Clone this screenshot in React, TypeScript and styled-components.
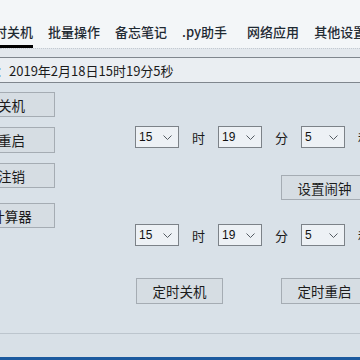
import styled, { createGlobalStyle } from 'styled-components';

const GlobalStyle = createGlobalStyle`
    html, body {
        margin: 0;
        padding: 0;
        overflow: hidden;
        background: #d9e1e8;
    }
`;

const cjk = `"Noto Sans CJK SC", "Noto Sans", sans-serif`;

// Janela inteira
const Window = styled.div`
    width: 360px;
    height: 360px;
    display: flex;
    flex-direction: column;
    overflow: hidden;
    background: #d9e1e8;
    font-family: ${cjk};
    color: #1b1b1b;
`;

const TabBar = styled.div`
    height: 48px;
    flex: none;
    display: flex;
    gap: 15px;
    background: #f3f6f8;
    white-space: nowrap;
`;

const Tab = styled.div<{ $active?: boolean; $offset?: number }>`
    box-sizing: border-box;
    height: 48px;
    display: flex;
    align-items: center;
    padding-top: 17px;
    margin-left: ${(p) => p.$offset ?? 0}px;
    border-bottom: 3px solid ${(p) => (p.$active ? '#000000' : 'transparent')};
    font-size: 13px;
    font-weight: 500;
    color: #1f2a33;
    flex: none;
`;

const Strip = styled.div`
    height: 8px;
    flex: none;
    background: #e3e8ed;
    border-top: 1px dotted #c3cad1;
`;

const DateRow = styled.div`
    box-sizing: border-box;
    height: 26px;
    flex: none;
    display: flex;
    align-items: center;
    background: #eaeef2;
    border-top: 1px solid #7f868d;
    border-bottom: 1px solid #7f868d;
    font-size: 13px;
    white-space: nowrap;
    margin-left: -4px;
`;

const Main = styled.div`
    height: 250px;
    flex: none;
    display: flex;
    gap: 80px;
    margin-left: -32px;
`;

const LeftColumn = styled.div`
    display: flex;
    flex-direction: column;
    padding-top: 9px;
    flex: none;
`;

const RightColumn = styled.div`
    display: flex;
    flex-direction: column;
    flex: none;
    width: 260px;
`;

const Button = styled.div<{ $top?: number; $height?: number }>`
    box-sizing: border-box;
    width: 87px;
    height: ${(p) => p.$height ?? 25}px;
    margin-top: ${(p) => p.$top ?? 0}px;
    display: flex;
    align-items: center;
    justify-content: center;
    background: #d6dde3;
    border: 1px solid #a5acb3;
    font-size: 13.5px;
    color: #1b1b1b;
    white-space: nowrap;
    flex: none;
`;

const ComboRow = styled.div<{ $top: number }>`
    display: flex;
    align-items: center;
    margin-top: ${(p) => p.$top}px;
    height: 22px;
`;

const Combo = styled.div`
    box-sizing: border-box;
    width: 44px;
    height: 22px;
    display: flex;
    align-items: center;
    justify-content: space-between;
    padding: 0 6px 0 3px;
    background: #edf1f5;
    border: 1px solid #7c8288;
    font-family: "Liberation Sans", Arial, sans-serif;
    font-size: 12px;
    color: #111;
    flex: none;
`;

const Unit = styled.div`
    width: 39px;
    text-align: center;
    font-size: 13px;
    flex: none;
`;

const ButtonRow = styled.div<{ $top: number; $left: number }>`
    display: flex;
    gap: 58px;
    margin-top: ${(p) => p.$top}px;
    padding-left: ${(p) => p.$left}px;
`;

const Footer = styled.div`
    height: 23px;
    flex: none;
    border-top: 1px solid #bcc5cd;
    background: #d8e0e7;
`;

const TaskEdge = styled.div`
    height: 3px;
    flex: none;
    background: #1c5a9f;
`;

const Chevron = () => (
    <svg width="9" height="5" viewBox="0 0 9 5">
        <polyline points="0.5,0.5 4.5,4.5 8.5,0.5" fill="none" stroke="#555c63" strokeWidth="1" />
    </svg>
);

const Select = ({ value }: { value: string }) => (
    <Combo>
        <span>{value}</span>
        <Chevron />
    </Combo>
);

const TimePicker = ({ top }: { top: number }) => (
    <ComboRow $top={top}>
        <Select value="15" />
        <Unit>时</Unit>
        <Select value="19" />
        <Unit>分</Unit>
        <Select value="5" />
        <Unit>秒</Unit>
    </ComboRow>
);

const App = () => {
    return (
        <Window>
            <GlobalStyle />
            <TabBar>
                <Tab $active $offset={-19}>定时关机</Tab>
                <Tab>批量操作</Tab>
                <Tab>备忘笔记</Tab>
                <Tab>.py助手</Tab>
                <Tab $offset={5}>网络应用</Tab>
                <Tab>其他设置</Tab>
            </TabBar>
            <Strip />
            <DateRow>：2019年2月18日15时19分5秒</DateRow>
            <Main>
                <LeftColumn>
                    <Button>关机</Button>
                    <Button $top={10} $height={26}>重启</Button>
                    <Button $top={10}>注销</Button>
                    <Button $top={15}>计算器</Button>
                </LeftColumn>
                <RightColumn>
                    <TimePicker top={43} />
                    <ButtonRow $top={27} $left={146}>
                        <Button>设置闹钟</Button>
                    </ButtonRow>
                    <TimePicker top={24} />
                    <ButtonRow $top={32} $left={1}>
                        <Button $height={26}>定时关机</Button>
                        <Button $height={26}>定时重启</Button>
                    </ButtonRow>
                </RightColumn>
            </Main>
            <Footer />
            <TaskEdge />
        </Window>
    );
};

export default App;
